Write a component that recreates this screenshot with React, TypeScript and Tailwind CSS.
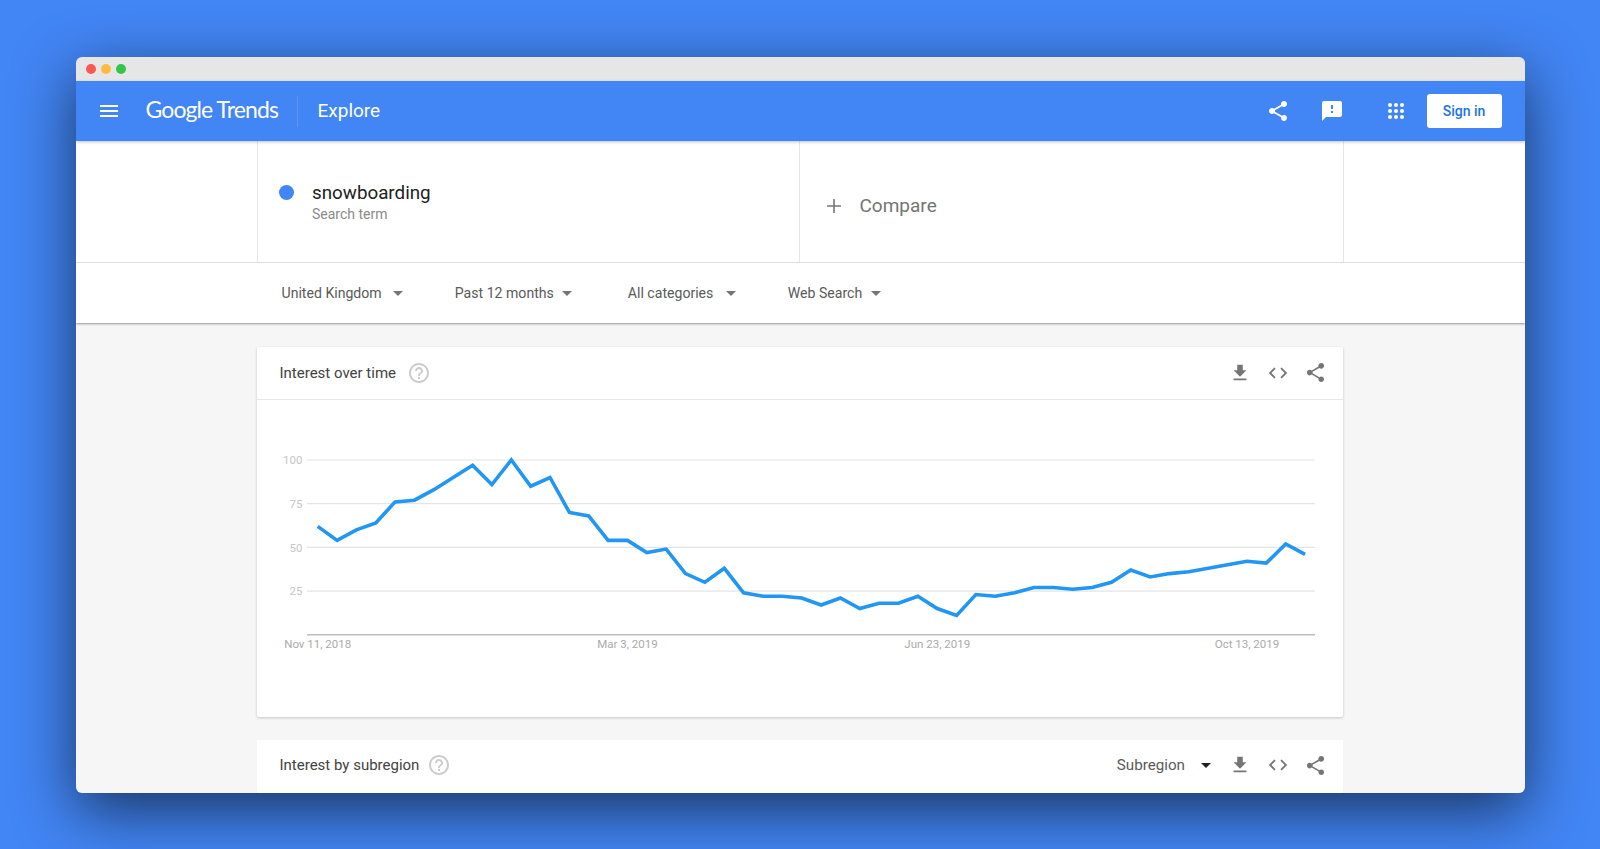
const values = [62, 54, 60, 64, 76, 77, 83, 90, 97, 86, 100, 85, 90, 70, 68, 54, 54, 47, 49, 35, 30, 38, 24, 22, 22, 21, 17, 21, 15, 18, 18, 22, 15, 11, 23, 22, 24, 27, 27, 26, 27, 30, 37, 33, 35, 36, 38, 40, 42, 41, 52, 46]

const paths = {
  menu: 'M3 18h18v-2H3v2zm0-5h18v-2H3v2zm0-7v2h18V6H3z',
  share: 'M18 16.08c-.76 0-1.44.3-1.96.77L8.91 12.7c.05-.23.09-.46.09-.7s-.04-.47-.09-.7l7.05-4.11c.54.5 1.25.81 2.04.81 1.66 0 3-1.34 3-3s-1.34-3-3-3-3 1.34-3 3c0 .24.04.47.09.7L8.04 9.81C7.5 9.31 6.79 9 6 9c-1.66 0-3 1.34-3 3s1.34 3 3 3c.79 0 1.5-.31 2.04-.81l7.12 4.16c-.05.21-.08.43-.08.65 0 1.61 1.31 2.92 2.92 2.92s2.92-1.31 2.92-2.92-1.31-2.92-2.92-2.92z',
  feedback: 'M20 2H4c-1.1 0-1.99.9-1.99 2L2 22l4-4h14c1.1 0 2-.9 2-2V4c0-1.1-.9-2-2-2zm-7 12h-2v-2h2v2zm0-4h-2V6h2v4z',
  download: 'M19 9h-4V3H9v6H5l7 7 7-7zM5 18v2h14v-2H5z',
  code: 'M9.4 16.6L4.8 12l4.6-4.6L8 6l-6 6 6 6 1.4-1.4zm5.2 0l4.6-4.6-4.6-4.6L16 6l6 6-6 6-1.4-1.4z',
  help: 'M11 18h2v-2h-2v2zm1-16C6.48 2 2 6.48 2 12s4.48 10 10 10 10-4.48 10-10S17.52 2 12 2zm0 18c-4.41 0-8-3.59-8-8s3.59-8 8-8 8 3.59 8 8-3.59 8-8 8zm0-14c-2.21 0-4 1.79-4 4h2c0-1.1.9-2 2-2s2 .9 2 2c0 2-3 1.75-3 5h2c0-2.25 3-2.5 3-5 0-2.21-1.79-4-4-4z',
}

function Icon({ d, className }: { d: string; className: string }) {
  return (
    <svg viewBox="0 0 24 24" fill="currentColor" className={className}>
      <path d={d} />
    </svg>
  )
}

function AppsIcon() {
  const dots = [0, 1, 2].flatMap((row) => [0, 1, 2].map((col) => [col, row]))
  return (
    <svg viewBox="0 0 16 16" fill="currentColor" className="h-4 w-4">
      {dots.map(([col, row]) => (
        <circle key={`${col}-${row}`} cx={2 + col * 6} cy={2 + row * 6} r="2" />
      ))}
    </svg>
  )
}

function Caret({ className }: { className: string }) {
  return <span className={`h-0 w-0 border-x-[5px] border-t-[5.5px] border-x-transparent ${className}`} />
}

function CardActions() {
  return (
    <div className="flex items-center text-[#757575]">
      <Icon d={paths.download} className="h-[22px] w-[22px]" />
      <Icon d={paths.code} className="ml-[16px] h-[22px] w-[22px]" />
      <Icon d={paths.share} className="ml-[15.5px] h-[23px] w-[23px]" />
    </div>
  )
}

function TrendChart() {
  const y = (v: number) => 60 + (100 - v) * 1.747
  const x = (i: number) => 60.7 + i * 19.36
  const line = values.map((v, i) => `${x(i).toFixed(1)},${y(v).toFixed(1)}`).join(' ')

  return (
    <svg viewBox="0 0 1086 317" className="block h-[317px] w-[1086px]">
      {[100, 75, 50, 25].map((v) => (
        <g key={v}>
          <line x1="50" x2="1058" y1={y(v)} y2={y(v)} stroke="#e4e4e4" strokeWidth="1.2" />
          <text x="45.5" y={y(v) + 4.2} textAnchor="end" fontSize="11.5" fill="#c6c6c6">
            {v}
          </text>
        </g>
      ))}
      <line x1="50" x2="1058" y1="234.7" y2="234.7" stroke="#bdbdbd" strokeWidth="1.5" />
      {[
        [0, 'Nov 11, 2018'],
        [16, 'Mar 3, 2019'],
        [32, 'Jun 23, 2019'],
        [48, 'Oct 13, 2019'],
      ].map(([i, label]) => (
        <text key={label} x={x(i as number)} y="247.5" textAnchor="middle" fontSize="11.5" fill="#aaaaaa">
          {label}
        </text>
      ))}
      <polyline points={line} fill="none" stroke="#2196f3" strokeWidth="3.6" strokeLinejoin="miter" />
    </svg>
  )
}

const filters = [
  { label: 'United Kingdom', gap: 'mr-[11px]', width: 'w-[173.3px]' },
  { label: 'Past 12 months', gap: 'mr-[8px]', width: 'w-[173px]' },
  { label: 'All categories', gap: 'mr-[13px]', width: 'w-[160px]' },
  { label: 'Web Search', gap: 'mr-[9px]', width: 'w-[100px]' },
]

export default function App() {
  return (
    <div className="h-[849px] w-[1600px] overflow-hidden bg-[#4285f4] pl-[75.5px] pt-[56.5px] font-['Roboto',sans-serif]">
      <div className="flex h-[736px] w-[1449px] flex-col overflow-hidden rounded-[6px] shadow-[0_18px_60px_rgba(0,0,0,0.6)]">
        <div className="flex h-[24.5px] shrink-0 items-center gap-[5px] bg-[#e6e6e6] pl-[10px]">
          <span className="h-[10px] w-[10px] rounded-full bg-[#fc5753]" />
          <span className="h-[10px] w-[10px] rounded-full bg-[#fdbc40]" />
          <span className="h-[10px] w-[10px] rounded-full bg-[#33c748]" />
        </div>

        <header className="z-10 flex h-[60px] shrink-0 items-center bg-[#4285f4] pl-[21px] pr-[23px] text-white shadow-[0_1px_3px_rgba(0,0,0,0.25)]">
          <Icon d={paths.menu} className="h-6 w-6" />
          <span className="ml-[25px] mt-[-4px] w-[151px] font-['Lato',sans-serif] text-[23px] tracking-[-0.9px]">Google Trends</span>
          <span className="h-[31px] w-px bg-[#5b96f6]" />
          <span className="ml-[20px] text-[19px]">Explore</span>
          <div className="ml-auto flex items-center">
            <Icon d={paths.share} className="h-6 w-6" />
            <Icon d={paths.feedback} className="ml-[30px] h-6 w-6" />
            <div className="ml-[44px]"><AppsIcon /></div>
            <button className="ml-[23px] h-[34px] w-[75px] rounded-[3px] bg-white text-[14px] font-medium text-[#1a73e8]">Sign in</button>
          </div>
        </header>

        <div className="h-[121.5px] shrink-0 border-b border-[#e6e6e6] bg-white">
          <div className="mx-auto grid h-full w-[1087px] grid-cols-[541px_1fr] border-x border-[#e6e6e6]">
            <div className="flex items-start pl-[21px] pt-[40px]">
              <span className="mt-[3.5px] h-[15px] w-[15px] rounded-full bg-[#4285f4]" />
              <div className="ml-[18.5px]">
                <div className="text-[18.8px] leading-[24px] text-[#212121]">snowboarding</div>
                <div className="text-[14px] leading-[19px] text-[#8a8a8a]">Search term</div>
              </div>
            </div>
            <div className="flex items-center border-l border-[#e6e6e6] pl-[26px] pt-[10px] text-[#757575]">
              <svg viewBox="0 0 16 16" className="h-[16px] w-[16px]" fill="none" stroke="currentColor" strokeWidth="1.6">
                <path d="M8 1v14M1 8h14" />
              </svg>
              <span className="ml-[18px] text-[19px]">Compare</span>
            </div>
          </div>
        </div>

        <div className="z-10 h-[60.5px] shrink-0 bg-white pt-[1.5px] shadow-[0_1px_2px_rgba(0,0,0,0.4)]">
          <div className="mx-auto flex h-full w-[1086px] items-center pl-[24.5px] text-[14.1px] text-[#5a5a5a]">
            {filters.map((f) => (
              <div key={f.label} className={`flex shrink-0 items-center ${f.width}`}>
                <span className={f.gap}>{f.label}</span>
                <Caret className="border-t-[#757575]" />
              </div>
            ))}
          </div>
        </div>

        <main className="min-h-0 flex-1 overflow-hidden bg-[#f6f6f6] pt-[23.5px]">
          <section className="mx-auto h-[370px] w-[1086px] rounded-[2px] bg-white shadow-[0_1px_3px_rgba(0,0,0,0.2)]">
            <div className="flex h-[53px] items-center border-b border-[#e6e6e6] pl-[22.5px] pr-[16px]">
              <span className="mt-[1px] text-[15px] text-[#424242]">Interest over time</span>
              <Icon d={paths.help} className="ml-[11px] h-6 w-6 text-[#cccccc]" />
              <div className="ml-auto"><CardActions /></div>
            </div>
            <TrendChart />
          </section>

          <section className="mx-auto mt-[23px] h-[100px] w-[1086px] bg-white">
            <div className="flex h-[51px] items-center pl-[22.5px] pr-[16px]">
              <span className="text-[15px] text-[#424242]">Interest by subregion</span>
              <Icon d={paths.help} className="ml-[7.5px] h-6 w-6 text-[#cccccc]" />
              <span className="ml-auto text-[15.2px] text-[#5a5a5a]">Subregion</span>
              <Caret className="ml-[15.5px] mr-[18px] border-t-[#212121]" />
              <CardActions />
            </div>
          </section>
        </main>
      </div>
    </div>
  )
}
